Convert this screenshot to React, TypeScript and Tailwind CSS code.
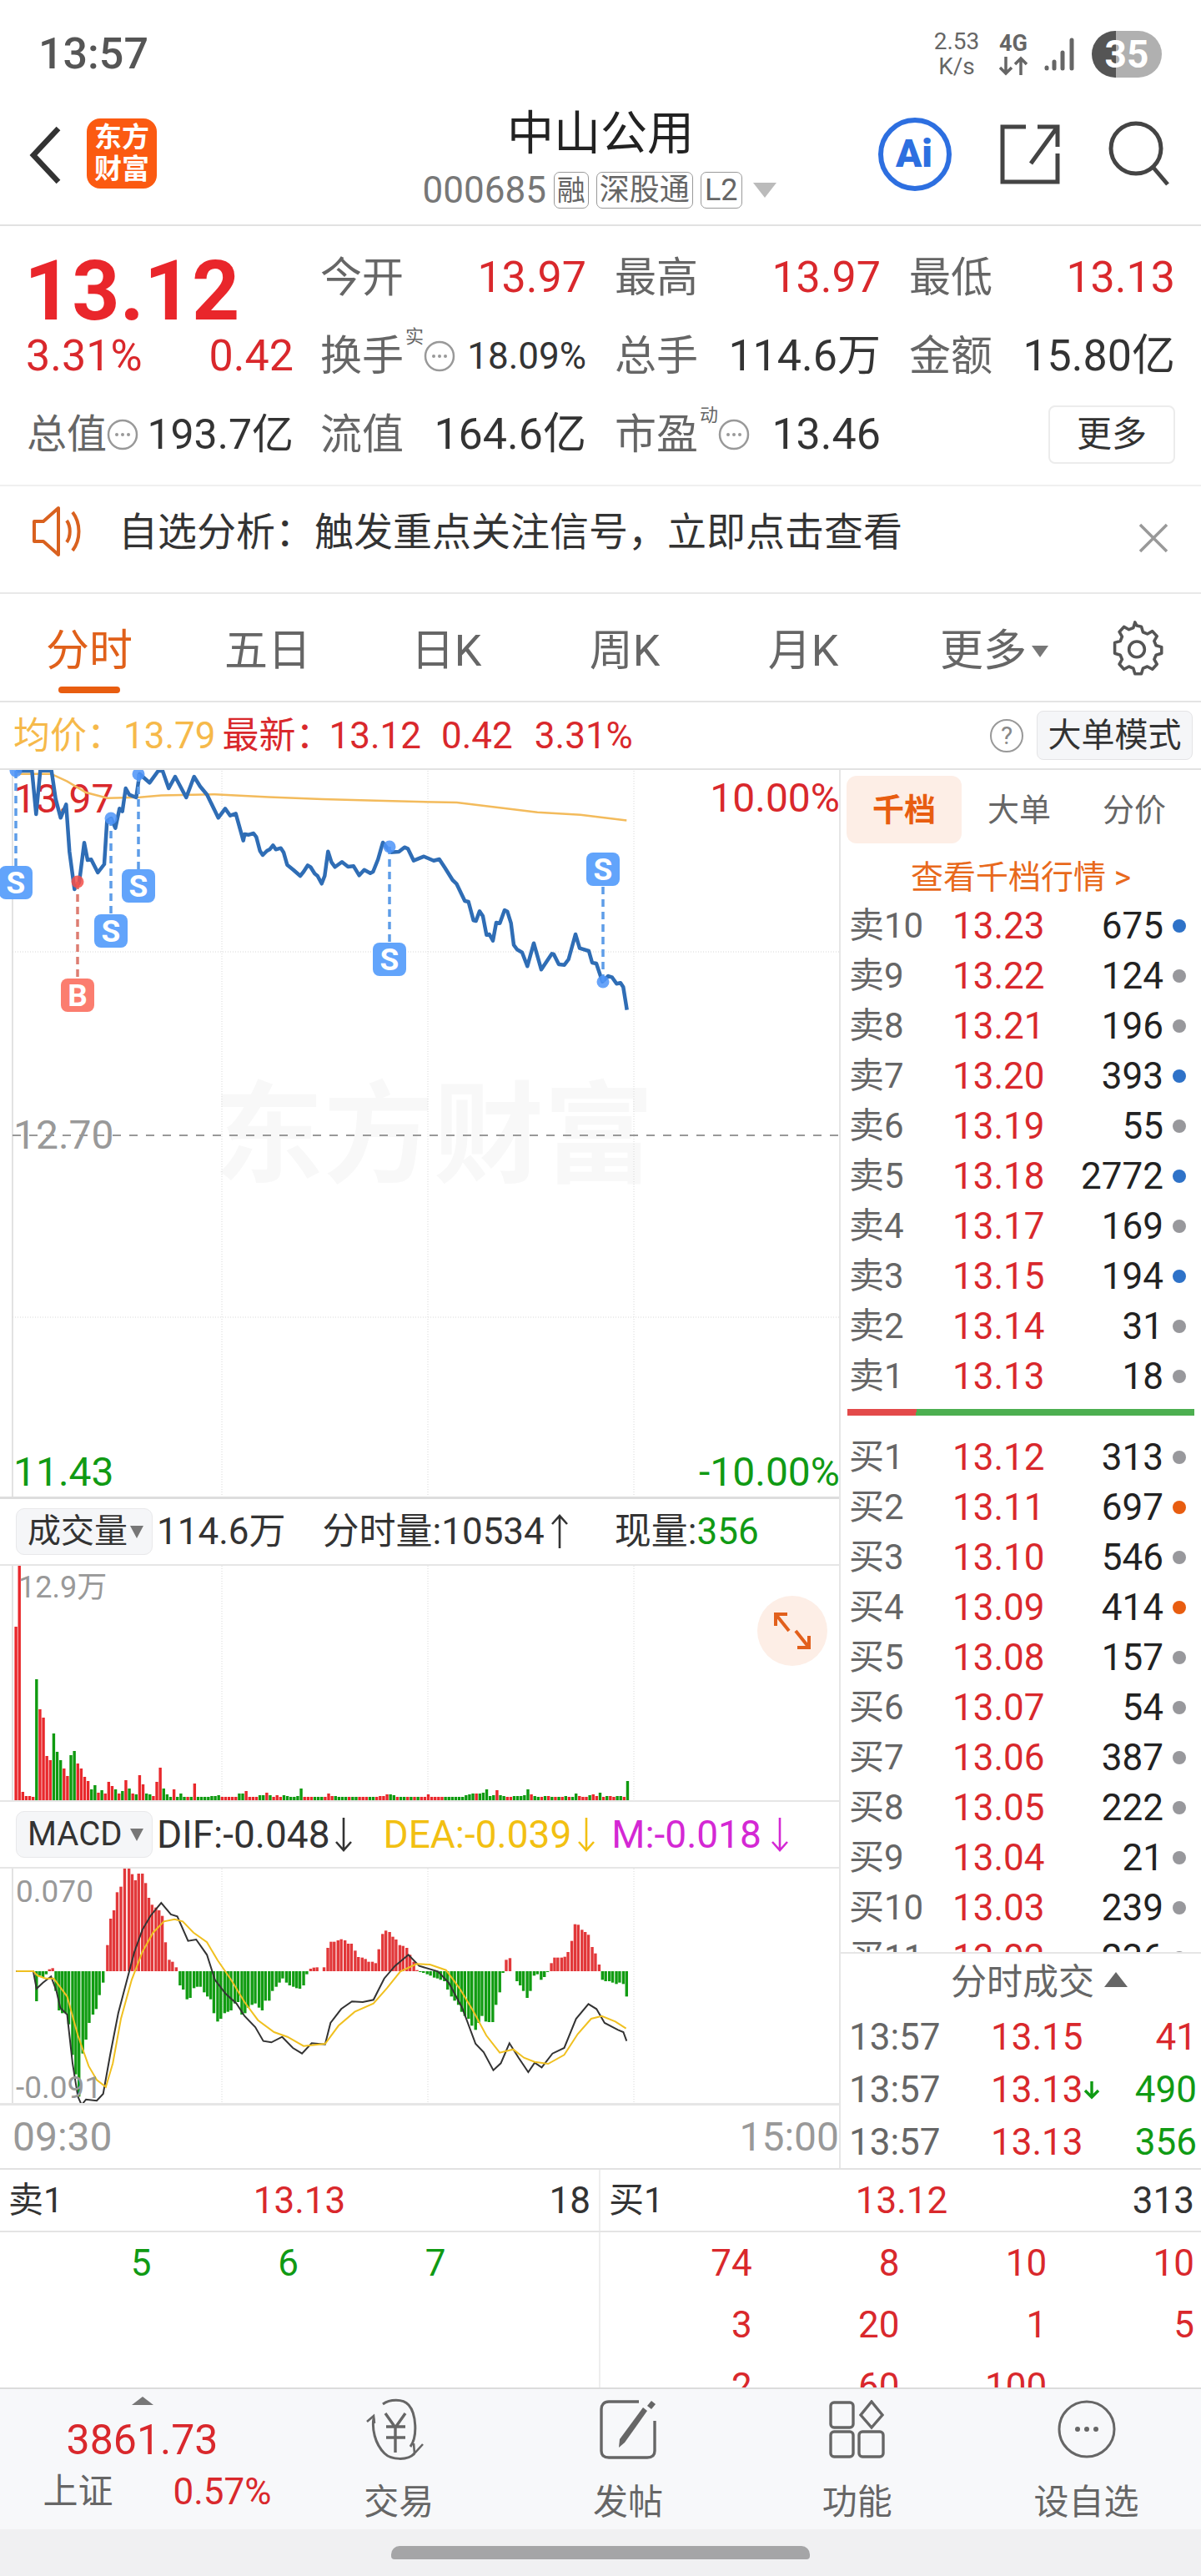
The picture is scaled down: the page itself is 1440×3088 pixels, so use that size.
import React from "react";

// 分时价格线 (real px, chart top = 921)
const pricePts: number[][] = [
  [57,10],[115,8],[130,165],[145,8],[185,8],[200,110],[218,178],[238,130],[250,300],[268,435],[285,410],[303,268],[315,330],[328,328],[352,375],[375,345],[385,190],[400,180],[415,215],[430,145],[440,155],[452,72],[465,95],[490,105],[502,20],[538,52],[570,8],[585,10],[607,72],[630,30],[670,105],[698,30],[720,65],[745,95],[785,178],[810,145],[828,170],[848,163],[875,260],
].map(([x, y]) => [x / 3, y / 3]);
const priceTail = [
  [10,30],[25,32],[42,27],[52,40],[65,90],[75,105],[90,90],[100,85],[112,70],[122,85],[140,80],[150,95],[163,140],[185,158],[210,180],[222,165],[237,142],[247,148],[262,172],[272,180],[287,208],[298,180],[310,92],[322,130],[335,148],[360,130],[382,147],[402,145],[422,178],[440,158],[462,170],[472,165],[490,120],[507,60],[535,95],[565,93],[585,77],[597,82],[618,125],[655,110],[690,125],[710,120],[730,150],[758,195],[772,208],[802,270],[815,273],[833,340],[842,342],[855,307],[867,325],[880,392],[890,390],[903,413],[915,348],[928,350],[945,303],[955,308],[968,350],[978,428],[990,445],[1008,455],[1027,505],[1050,422],[1077,517],[1095,490],[1115,460],[1122,462],[1140,498],[1160,500],[1175,480],[1200,390],[1215,440],[1248,450],[1260,492],[1275,495],[1297,560],[1318,540],[1332,545],[1348,568],[1362,565],[1372,580],[1385,662],
].map(([x, y]) => [290 + x / 3, 69 + y / 3]);
const avgPts = [
  [30,735],[95,735],[125,755],[160,785],[200,800],[260,798],[300,793],[400,790],[500,797],[600,803],[700,807],[850,812],[930,826],[1000,838],[1080,845],[1166,860],
].map(([x, y]) => [x / 1.552, (y - 720) / 2.24]);

const toLine = (pts: number[][]) => pts.map(([x, y]) => `${x.toFixed(1)},${y.toFixed(1)}`).join(" ");

// 成交量: + red, - green, px height
const volBars = [
  208,284,10,5,5,4,-145,109,99,53,48,-80,-58,-48,38,29,-54,-59,44,38,28,23,-13,-18,9,-12,8,22,17,-13,8,-11,24,-14,8,-7,30,19,-8,-7,5,22,39,-14,-7,-4,13,-4,-8,-4,4,-4,20,
  -4,-4,-4,-4,-5,-5,-6,4,4,4,4,4,-8,-8,11,4,4,4,-6,-6,9,-6,4,6,4,-6,-5,-4,-4,-5,-14,4,4,4,-4,-4,-4,4,8,5,-5,-4,-4,-4,4,-4,-4,4,4,4,-4,-4,4,5,5,7,-7,-6,4,-4,
  -4,4,-4,4,-4,4,4,7,4,4,4,4,-4,-4,-4,-4,-4,-4,-6,-7,-8,8,-8,-9,-13,-5,-6,12,-6,-5,4,4,-5,-5,-5,-6,-13,7,-5,-4,4,-5,5,-4,4,-4,4,-5,4,-4,-8,5,4,4,-6,7,5,-9,4,-5,5,4,-5,-5,4,-23,
];

// MACD: [zoom x, zoom y]; zero at 549
const macdBars = [
  [68,657],[74,565],[80,570],[86,560],[92,542],[98,538],[104,620],[110,690],[116,700],[122,700],[128,740],[135,850],[141,920],[147,1000],[154,845],[160,795],[166,735],[173,705],[179,685],[185,635],[192,590],
  [200,455],[206,360],[212,330],[218,265],[225,245],[232,180],[240,178],[246,200],[252,222],[258,198],[265,198],[271,232],[277,285],[283,310],[290,320],[296,330],[302,350],[308,445],[315,508],[321,515],[328,535],
  [335,600],[341,615],[348,650],[354,645],[361,610],[367,605],[373,605],[380,625],[386,640],[392,650],[398,700],[405,730],[411,720],[418,700],[424,695],[430,690],[437,665],[443,660],[450,705],[456,700],[462,680],[469,670],[475,665],[482,680],[488,690],[494,655],[501,655],[507,620],[514,605],[520,590],[526,575],[533,590],[539,600],[546,605],[552,610],[558,612],[565,600],[571,560],
  [578,540],[584,536],[590,535],[603,535],[610,465],[616,443],[622,443],[629,438],[635,434],[642,438],[648,450],[654,450],[661,475],[667,498],[674,500],[680,505],[686,515],[693,515],[699,520],[705,470],[712,415],[718,403],[725,408],[731,425],[737,435],[744,455],[750,458],[757,465],[763,490],[770,515],[776,545],
  [782,552],[788,555],[795,560],[801,565],[808,572],[814,575],[820,580],[827,585],[833,615],[840,640],[846,655],[853,670],[859,695],[865,710],[872,720],[878,745],[885,760],[891,735],[897,710],[904,730],[910,732],[917,732],[923,670],[930,625],[936,555],
  [942,508],[949,502],[962,585],[968,600],[974,620],[981,645],[987,620],[994,565],[1000,560],[1007,580],[1013,570],[1019,552],
  [1026,520],[1032,500],[1038,500],[1045,500],[1051,497],[1057,480],[1064,440],[1070,380],[1076,382],[1083,400],[1089,408],[1095,418],[1102,462],[1108,485],[1115,525],
  [1121,580],[1127,585],[1134,585],[1140,590],[1147,595],[1153,590],[1160,595],[1166,640],
];
const difPts = [
  [30,549],[62,549],[68,612],[80,590],[95,568],[105,620],[112,680],[125,705],[135,880],[145,1000],[152,1030],[160,1010],[180,1015],[192,990],[205,850],[220,700],[235,590],[250,480],[265,400],[280,350],[300,303],[318,345],[330,352],[350,440],[365,435],[385,490],[400,580],[420,630],[440,665],[455,710],[475,750],[490,800],[505,805],[525,785],[545,825],[562,845],[580,808],[605,812],[615,735],[635,685],[655,658],[675,660],[695,652],[715,575],[735,530],[760,490],[780,530],[815,550],[835,590],[860,680],[885,810],[900,840],[918,905],[932,880],[948,808],[965,860],[983,912],[995,878],[1008,895],[1028,845],[1050,825],[1072,720],[1095,667],[1110,685],[1125,735],[1150,760],[1160,768],[1166,800],
].map(([x, y]) => [x / 1.552, y / 3 - 60]);
const deaPts = [
  [30,549],[62,549],[70,565],[85,575],[100,575],[125,640],[145,780],[165,890],[180,940],[197,965],[210,880],[225,720],[245,580],[265,480],[285,410],[305,370],[325,362],[340,370],[360,410],[385,445],[405,510],[430,580],[455,660],[480,725],[510,768],[535,785],[565,818],[605,810],[630,745],[660,695],[695,665],[720,610],[745,550],[775,523],[800,525],[830,545],[855,610],[880,690],[905,780],[930,842],[955,830],[975,860],[995,875],[1020,882],[1050,850],[1075,775],[1100,720],[1120,710],[1145,730],[1165,755],
].map(([x, y]) => [x / 1.552, y / 3 - 60]);

const asks = [
  ["卖10","13.23","675","b"],["卖9","13.22","124","g"],["卖8","13.21","196","g"],["卖7","13.20","393","b"],["卖6","13.19","55","g"],
  ["卖5","13.18","2772","b"],["卖4","13.17","169","g"],["卖3","13.15","194","b"],["卖2","13.14","31","g"],["卖1","13.13","18","g"],
];
const bids = [
  ["买1","13.12","313","g"],["买2","13.11","697","o"],["买3","13.10","546","g"],["买4","13.09","414","o"],["买5","13.08","157","g"],
  ["买6","13.07","54","g"],["买7","13.06","387","g"],["买8","13.05","222","g"],["买9","13.04","21","g"],["买10","13.03","239","g"],["买11","13.02","236","g"],
];
const dotColor: Record<string, string> = { b: "bg-[#2e72c8]", g: "bg-[#98989c]", o: "bg-[#e85d10]" };

const GridLines = ({ h }: { h: number }) => (
  <g stroke="#d8d8d8" strokeWidth="1" strokeDasharray="1 2">
    <line x1="266" y1="0" x2="266" y2={h} />
    <line x1="513" y1="0" x2="513" y2={h} />
    <line x1="760" y1="0" x2="760" y2={h} />
  </g>
);

const Marker = ({ x, y, dotY, kind }: { x: number; y: number; dotY: number; kind: "S" | "B" }) => {
  const fill = kind === "S" ? "#62a4fb" : "#fb7d6f";
  const dash = kind === "S" ? "#5e9de8" : "#dd7d72";
  const dot = kind === "S" ? "#4d94f8" : "#f4504a";
  return (
    <g>
      <line x1={x} y1={dotY} x2={x} y2={dotY < y ? y - 20 : y + 20} stroke={dash} strokeWidth="3.5" strokeDasharray="9 6" />
      <circle cx={x} cy={dotY} r="7.5" fill={dot} fillOpacity="0.85" />
      <rect x={x - 20} y={y - 20} width="40" height="40" rx="8" fill={fill} />
      <text x={x} y={y + 13} textAnchor="middle" fontSize="37" fontWeight="700" fill="#fff" fontFamily="Roboto, sans-serif">{kind}</text>
    </g>
  );
};

const QuoteCell = ({ label, value, red }: { label: string; value: string; red?: boolean }) => (
  <div className="flex items-center justify-between h-[94px]">
    <span className="text-[50px] leading-none text-[#666]">{label}</span>
    <span className={`text-[52px] leading-none ${red ? "text-[#d9282c]" : "text-[#333]"}`}>{value}</span>
  </div>
);

const Dots = () => (
  <svg width="38" height="38" viewBox="0 0 38 38" className="shrink-0">
    <circle cx="19" cy="19" r="17" fill="none" stroke="#999" strokeWidth="2.5" />
    <circle cx="12" cy="19" r="2" fill="#999" />
    <circle cx="19" cy="19" r="2" fill="#999" />
    <circle cx="26" cy="19" r="2" fill="#999" />
  </svg>
);

const Sup = ({ t }: { t: string }) => <span className="text-[22px] leading-none text-[#666] mb-[46px] ml-[2px]">{t}</span>;

const Arrow = ({ up, color, ml }: { up?: boolean; color: string; ml: string }) => (
  <svg width="24" height="44" viewBox="0 0 24 44" className={`shrink-0 ${ml}`}>
    <path d={up ? "M12 42V3M3 13l9-10 9 10" : "M12 2v39M3 31l9 10 9-10"} fill="none" stroke={color} strokeWidth="2.6" />
  </svg>
);

const DepthRow = ({ r }: { r: string[] }) => (
  <div className="flex items-center h-[60px] shrink-0 pl-[10px]">
    <span className="w-[124px] text-[42px] leading-none text-[#666]">{r[0]}</span>
    <span className="w-[110px] text-[44px] leading-none text-[#d9282c]">{r[1]}</span>
    <span className="w-[143px] text-right text-[44px] leading-none text-[#222]">{r[2]}</span>
    <span className={`ml-[11px] w-4 h-4 rounded-full ${dotColor[r[3]]}`} />
  </div>
);

const Trade = ({ p, q, down, h }: { p: string; q: string; down?: boolean; h: string }) => (
  <div className={`flex items-center pl-[10px] pr-[5px] text-[44px] leading-none ${h}`}>
    <span className="w-[170px] text-[#666]">13:57</span>
    <span className="w-[110px] text-[#d9282c]">{p}</span>
    {down && (
      <svg width="22" height="28" viewBox="0 0 22 28" className="shrink-0">
        <path d="M11 4v19M3 15l8 8 8-8" fill="none" stroke="#109a14" strokeWidth="3.4" />
      </svg>
    )}
    <span className={`flex-1 text-right ${q === "41" ? "text-[#d9282c]" : "text-[#109a14]"}`}>{q}</span>
  </div>
);

const NavItem = ({ label, children }: { label: string; children: React.ReactNode }) => (
  <div className="w-[275px] flex flex-col items-center pt-[12px]">
    <div className="h-[72px] flex items-center">{children}</div>
    <span className="mt-[20px] text-[42px] leading-[64px] text-[#666]">{label}</span>
  </div>
);

const Dropdown = ({ label }: { label: string }) => (
  <div className="ml-[19px] w-[164px] h-[56px] flex items-center pl-[13px] bg-[#f5f6f8] border border-[#e8e8ea] rounded-[10px]">
    <span className="w-[122px] text-[40px] leading-none text-[#333] whitespace-nowrap">{label}</span>
    <svg width="18" height="18" viewBox="0 0 18 18"><path d="M1 2h16L9 17z" fill="#777" /></svg>
  </div>
);

export default function App() {
  return (
    <div className="w-[1440px] h-[3088px] overflow-hidden bg-white [font-family:Roboto,'Noto_Sans_CJK_SC',sans-serif]">
      {/* status bar */}
      <div className="h-[110px] pt-[20px] pl-[46px] pr-[47px] flex items-center justify-between">
        <span className="text-[52px] leading-none font-medium text-[#555]">13:57</span>
        <div className="flex items-center">
          <div className="w-[60px] flex flex-col items-center text-[28px] leading-[30px] text-[#666]">
            <span>2.53</span>
            <span>K/s</span>
          </div>
          <div className="ml-[20px] w-[36px] flex flex-col items-center">
            <span className="text-[27px] leading-[28px] font-bold text-[#666]">4G</span>
            <svg width="36" height="26" viewBox="0 0 36 26">
              <path d="M9 2v20M2 15l7 7 7-7M27 24V4M20 11l7-7 7 7" fill="none" stroke="#666" strokeWidth="3.5" />
            </svg>
          </div>
          <svg width="40" height="42" viewBox="0 0 40 42" className="ml-[18px]">
            <g stroke="#666" strokeWidth="5" strokeLinecap="round">
              <line x1="4" y1="37" x2="4" y2="38" />
              <line x1="13" y1="30" x2="13" y2="38" />
              <line x1="23" y1="19" x2="23" y2="38" />
              <line x1="34" y1="4" x2="34" y2="38" />
            </g>
          </svg>
          <div className="ml-[18px] w-[84px] h-[56px] rounded-full overflow-hidden flex items-center justify-center text-[46px] font-bold leading-none text-white bg-[linear-gradient(90deg,#555_0_34%,#b0b0b0_34%_100%)]">35</div>
        </div>
      </div>

      {/* header */}
      <div className="h-[161px] border-b-2 border-[#e2e2e2] grid grid-cols-[1fr_auto_1fr]">
        <div className="flex items-start pl-[34px] pt-[32px]">
          <svg width="40" height="72" viewBox="0 0 40 72" className="mt-[8px]">
            <path d="M36 4L6 36l30 32" fill="none" stroke="#333" strokeWidth="6.5" />
          </svg>
          <div className="ml-[30px] w-[84px] h-[84px] rounded-[16px] bg-[#fb5a11] flex flex-col items-center justify-center text-white text-[33px] font-bold leading-[38px]">
            <span>东方</span>
            <span>财富</span>
          </div>
        </div>
        <div className="flex flex-col items-center pt-[18px]">
          <span className="text-[56px] leading-[64px] text-[#222]">中山公用</span>
          <div className="mt-[14px] -ml-[3px] h-[44px] flex items-center">
            <span className="text-[44px] leading-none text-[#777]">000685</span>
            <span className="ml-[9px] h-[44px] px-[3px] flex items-center border border-[#999] rounded-[7px] text-[34px] leading-none text-[#666]">融</span>
            <span className="ml-[9px] h-[44px] px-[3px] flex items-center border border-[#999] rounded-[7px] text-[36px] leading-none text-[#666]">深股通</span>
            <span className="ml-[9px] h-[44px] px-[4px] flex items-center border border-[#999] rounded-[7px] text-[36px] leading-none text-[#666]">L2</span>
            <svg width="28" height="18" viewBox="0 0 28 18" className="ml-[13px]"><path d="M0 0h28L14 18z" fill="#bbb" /></svg>
          </div>
        </div>
        <div className="flex items-start justify-end pr-[35px] pt-[30px]">
          <svg width="90" height="90" viewBox="0 0 90 90">
            <circle cx="45" cy="45" r="41" fill="none" stroke="#2d6fe0" strokeWidth="6" />
            <text x="44" y="60" textAnchor="middle" fontSize="46" fontWeight="900" fill="#2d6fe0" fontFamily="Roboto, sans-serif">Ai</text>
          </svg>
          <svg width="74" height="74" viewBox="0 0 74 74" className="ml-[56px] mt-[8px]">
            <path d="M32 4H4v66h66V36M70 4L38 48M46 4h24v24" fill="none" stroke="#444" strokeWidth="5" />
          </svg>
          <svg width="76" height="78" viewBox="0 0 76 78" className="ml-[57px] mt-[5px]">
            <circle cx="33" cy="33" r="30" fill="none" stroke="#444" strokeWidth="5" />
            <path d="M54 56l17 20" fill="none" stroke="#444" strokeWidth="5" />
          </svg>
        </div>
      </div>

      {/* quote */}
      <div className="h-[312px] pt-[15px] pl-[32px] border-b-2 border-[#f0f0f0] grid grid-cols-[318px_319px_319px_319px] grid-rows-[94px_94px_94px] gap-x-[34px]">
        <div className="pt-[24px] -ml-[3px] text-[100px] leading-[78px] font-bold text-[#e9262b]">13.12</div>
        <QuoteCell label="今开" value="13.97" red />
        <QuoteCell label="最高" value="13.97" red />
        <QuoteCell label="最低" value="13.13" red />
        <div className="w-[320px] h-[94px] flex items-center justify-between text-[#d9282c] leading-none">
          <span className="-ml-[1px] text-[52px]">3.31%</span>
          <span className="text-[52px]">0.42</span>
        </div>
        <div className="flex items-center justify-between h-[94px]">
          <div className="flex items-center">
            <span className="text-[50px] leading-none text-[#666]">换手</span>
            <Sup t="实" />
            <Dots />
          </div>
          <span className="text-[44px] leading-none text-[#333]">18.09%</span>
        </div>
        <QuoteCell label="总手" value="114.6万" />
        <QuoteCell label="金额" value="15.80亿" />
        <div className="w-[320px] h-[94px] flex items-center justify-between">
          <div className="flex items-center">
            <span className="text-[48px] leading-none text-[#666]">总值</span>
            <Dots />
          </div>
          <span className="text-[50px] leading-none text-[#333]">193.7亿</span>
        </div>
        <QuoteCell label="流值" value="164.6亿" />
        <div className="flex items-center justify-between h-[94px]">
          <div className="flex items-center">
            <span className="text-[50px] leading-none text-[#666]">市盈</span>
            <Sup t="动" />
            <Dots />
          </div>
          <span className="text-[52px] leading-none text-[#333]">13.46</span>
        </div>
        <div className="flex justify-end items-center h-[94px]">
          <div className="w-[152px] h-[70px] flex items-center justify-center border-2 border-[#ececec] rounded-[8px] text-[42px] leading-none text-[#333]">更多</div>
        </div>
      </div>

      {/* notice */}
      <div className="h-[129px] flex items-start border-b-2 border-[#e8e8e8]">
        <svg width="64" height="66" viewBox="0 0 64 66" className="ml-[38px] mt-[21px]">
          <path d="M3 21h11L32 5v56L14 45H3zM42 20c5 7 5 19 0 26M49 10c10 13 10 33 0 46" fill="none" stroke="#d9611f" strokeWidth="4" strokeLinejoin="round" />
        </svg>
        <span className="ml-[40px] mt-[30px] text-[47px] leading-[50px] text-[#333] whitespace-nowrap">自选分析：触发重点关注信号，立即点击查看</span>
        <svg width="38" height="38" viewBox="0 0 38 38" className="ml-auto mr-[38px] mt-[43px]">
          <path d="M3 3l32 32M35 3L3 35" stroke="#999" strokeWidth="3.5" fill="none" />
        </svg>
      </div>

      {/* tabs */}
      <div className="h-[130px] flex items-start border-b-2 border-[#e4e4e4]">
        {["分时", "五日", "日K", "周K", "月K"].map((t, i) => (
          <div key={t} className="w-[214px] flex flex-col items-center pt-[37px]">
            <span className={`text-[52px] leading-[64px] ${i === 0 ? "text-[#e0601a]" : "text-[#666]"}`}>{t}</span>
            {i === 0 && <span className="mt-[10px] w-[74px] h-[8px] rounded-full bg-[#e85d10]" />}
          </div>
        ))}
        <div className="w-[214px] flex items-center justify-center pt-[37px] pl-[30px] h-[101px]">
          <span className="text-[52px] leading-[64px] text-[#666]">更多</span>
          <svg width="20" height="14" viewBox="0 0 20 14" className="ml-[6px]"><path d="M0 0h20L10 14z" fill="#777" /></svg>
        </div>
        <svg width="66" height="66" viewBox="0 0 24 24" className="ml-[46px] mt-[32px]" fill="none" stroke="#555" strokeWidth="1.3" strokeLinejoin="round">
          <path d="M12 2.2l2 .4.7 2.4 1.9.8 2.2-1.2 2 2.2-1.2 2.1.8 1.9 2.4.7v2.8l-2.4.7-.8 1.9 1.2 2.1-2 2.2-2.2-1.2-1.9.8-.7 2.4h-2.8l-.7-2.4-1.9-.8-2.2 1.2-2-2.2 1.2-2.1-.8-1.9-2.4-.7V9.6l2.4-.7.8-1.9-1.2-2.1 2-2.2 2.2 1.2 1.9-.8.7-2.4z" />
          <circle cx="12" cy="12.5" r="3.4" />
        </svg>
      </div>

      {/* average row */}
      <div className="h-[79px] pl-[16px] pr-[10px] flex items-center text-[44px] leading-none">
        <span className="text-[#f6b94a]">均价：13.79</span>
        <span className="ml-[8px] text-[#d9282c]">最新：</span>
        <span className="-ml-[4px] text-[#d9282c]">13.12</span>
        <span className="ml-[24px] text-[#d9282c]">0.42</span>
        <span className="ml-[26px] text-[#d9282c]">3.31%</span>
        <div className="ml-auto flex items-center">
          <div className="w-[40px] h-[40px] rounded-full border-2 border-[#999] flex items-center justify-center text-[30px] leading-none text-[#888]">?</div>
          <div className="ml-[16px] w-[187px] h-[59px] flex items-center justify-center bg-[#f5f6f8] border border-[#e4e4e6] rounded-[8px] text-[40px] leading-none text-[#333]">大单模式</div>
        </div>
      </div>

      {/* main */}
      <div className="flex h-[1680px] border-t-2 border-b-2 border-[#e2e2e2]">
        <div className="w-[1008px] shrink-0 border-r-2 border-[#e6e6e6] flex flex-col">
          {/* price chart */}
          <div className="relative h-[874px] shrink-0 border-b-[3px] border-[#ddd] overflow-hidden">
            <div className="absolute left-[256px] top-[373px] text-[132px] leading-none font-bold text-[#f8f8f8] whitespace-nowrap">东方财富</div>
            <span className="absolute left-[16px] top-[10px] text-[48px] leading-[50px] text-[#d9282c]">13.97</span>
            <span className="absolute right-[-1px] top-[9px] text-[48px] leading-[50px] text-[#d9282c]">10.00%</span>
            <span className="absolute left-[16px] top-[413px] text-[48px] leading-[50px] text-[#999]">12.70</span>
            <span className="absolute left-[16px] top-[817px] text-[48px] leading-[50px] text-[#109a14]">11.43</span>
            <span className="absolute right-[-1px] top-[817px] text-[48px] leading-[50px] text-[#109a14]">-10.00%</span>
            <svg width="1006" height="871" className="absolute left-0 top-0">
              <g transform="translate(0 -2)">
                <line x1="15" y1="0" x2="15" y2="873" stroke="#e2e2e2" strokeWidth="2" />
                <GridLines h={873} />
                <g stroke="#d8d8d8" strokeWidth="1" strokeDasharray="1 2">
                  <line x1="15" y1="220" x2="1006" y2="220" />
                  <line x1="15" y1="658" x2="1006" y2="658" />
                </g>
                <line x1="15" y1="440" x2="1006" y2="440" stroke="#999" strokeWidth="2" strokeDasharray="10 10" />
                <polyline points={toLine(avgPts)} fill="none" stroke="#f3bb5c" strokeWidth="2.5" />
                <polyline points={toLine([...pricePts, ...priceTail])} fill="none" stroke="#2f6db5" strokeWidth="4.5" strokeLinejoin="round" />
                <Marker x={19} y={137} dotY={3} kind="S" />
                <Marker x={133} y={195} dotY={60} kind="S" />
                <Marker x={166} y={141} dotY={7} kind="S" />
                <Marker x={467} y={229} dotY={94} kind="S" />
                <Marker x={723} y={121} dotY={256} kind="S" />
                <Marker x={93} y={272} dotY={136} kind="B" />
              </g>
            </svg>
          </div>

          {/* volume header */}
          <div className="h-[78px] shrink-0 flex items-center text-[44px] leading-none text-[#333] whitespace-nowrap">
            <Dropdown label="成交量" />
            <span className="ml-[5px]">114.6万</span>
            <span className="ml-[44px]">分时量:10534</span>
            <Arrow up color="#333" ml="ml-[6px]" />
            <span className="ml-[54px]">现量:<span className="text-[#109a14]">356</span></span>
          </div>

          {/* volume chart */}
          <div className="relative h-[285px] shrink-0 border-t-2 border-b-[2px] border-[#e6e6e6]">
            <svg width="1006" height="281" viewBox="0 0 1006 281" className="absolute left-0 top-0">
              <line x1="15" y1="0" x2="15" y2="281" stroke="#e2e2e2" strokeWidth="2" />
              <GridLines h={281} />
              {volBars.map((v, i) => {
                const h = Math.abs(v);
                return <rect key={i} x={17.4 + i * 4.12} y={281 - h} width="3.4" height={h} fill={v > 0 ? "#e9282c" : "#0f9a10"} />;
              })}
            </svg>
            <span className="absolute left-[22px] top-[5px] text-[36px] leading-[42px] text-[#999]">12.9万</span>
            <div className="absolute left-[908px] top-[36px] w-[84px] h-[84px] rounded-full bg-[#fdeee6] flex items-center justify-center">
              <svg width="44" height="44" viewBox="0 0 44 44">
                <path d="M2 16V2h14M2 2l16 20M42 28v14H28M42 42L26 22" fill="none" stroke="#e2601c" strokeWidth="4" />
              </svg>
            </div>
          </div>

          {/* macd header */}
          <div className="h-[78px] shrink-0 flex items-center text-[46px] leading-none whitespace-nowrap">
            <Dropdown label="MACD" />
            <span className="ml-[5px] text-[#333]">DIF:-0.048</span>
            <Arrow color="#333" ml="ml-[4px]" />
            <span className="ml-[36px] text-[#f2c012]">DEA:-0.039</span>
            <Arrow color="#f2c012" ml="ml-[6px]" />
            <span className="ml-[18px] text-[#d428d4]">M:-0.018</span>
            <Arrow color="#d428d4" ml="ml-[10px]" />
          </div>

          {/* macd chart */}
          <div className="relative h-[286px] shrink-0 border-t-2 border-b-[3px] border-[#e6e6e6]">
            <svg width="1006" height="281" viewBox="0 0 1006 281" className="absolute left-0 top-0">
              <line x1="15" y1="0" x2="15" y2="281" stroke="#e2e2e2" strokeWidth="2" />
              <GridLines h={281} />
              {macdBars.map(([zx, zy], i) => {
                const y = zy / 3 - 60;
                const zero = 123;
                return (
                  <rect key={i} x={zx / 1.552 - 1.7} y={Math.min(y, zero)} width="3.4" height={Math.abs(y - zero)} fill={zy < 549 ? "#e2383a" : "#119c12"} />
                );
              })}
              <polyline points={toLine(difPts)} fill="none" stroke="#333" strokeWidth="2" />
              <polyline points={toLine(deaPts)} fill="none" stroke="#f0c020" strokeWidth="2" />
            </svg>
            <span className="absolute left-[19px] top-[6px] text-[37px] leading-[44px] text-[#999]">0.070</span>
            <span className="absolute left-[19px] top-[241px] text-[37px] leading-[44px] text-[#999]">-0.091</span>
          </div>

          {/* time axis */}
          <div className="flex-1 flex items-center justify-between pl-[15px] pr-[0px] text-[48px] leading-none text-[#999]">
            <span>09:30</span>
            <span>15:00</span>
          </div>
        </div>

        {/* right panel */}
        <div className="flex-1 min-w-0 flex flex-col">
          <div className="flex pt-[7px] pl-[7px] shrink-0">
            <div className="w-[138px] h-[81px] rounded-[12px] bg-[#fdeee6] flex items-center justify-center text-[38px] leading-none font-bold text-[#e85d10]">千档</div>
            <div className="w-[138px] h-[81px] flex items-center justify-center text-[38px] leading-none text-[#666]">大单</div>
            <div className="w-[138px] h-[81px] flex items-center justify-center text-[38px] leading-none text-[#666]">分价</div>
          </div>
          <div className="h-[69px] shrink-0 pt-[14px] flex items-center justify-center text-[39px] leading-none text-[#e8691c]">查看千档行情 &gt;</div>
          <div className="shrink-0 flex flex-col">
            {asks.map((r) => <DepthRow key={r[0]} r={r} />)}
          </div>
          <div className="mt-[9px] ml-[8px] mr-[8px] h-[8px] shrink-0 bg-[linear-gradient(105deg,#e34a4a_0_20%,#4caf50_20%_100%)]" />
          <div className="mt-[20px] h-[623px] shrink-0 overflow-hidden flex flex-col">
            {bids.map((r) => <DepthRow key={r[0]} r={r} />)}
          </div>
          <div className="border-t-2 border-[#e6e6e6] h-[70px] shrink-0 pl-[44px] flex items-center justify-center text-[#666]">
            <span className="text-[43px] leading-none">分时成交</span>
            <svg width="28" height="18" viewBox="0 0 28 18" className="ml-[12px] mb-[6px]"><path d="M0 18L14 0l14 18z" fill="#666" /></svg>
          </div>
          <Trade p="13.15" q="41" h="h-[64px]" />
          <Trade p="13.13" q="490" down h="h-[64px]" />
          <Trade p="13.13" q="356" h="h-[62px]" />
        </div>
      </div>

      {/* level 1 row */}
      <div className="flex h-[75px] border-b-2 border-[#e4e4e4] text-[44px] leading-none">
        <div className="w-[720px] shrink-0 border-r-2 border-[#eee] px-[10px] grid grid-cols-3 items-center">
          <span className="text-[42px] text-[#333]">卖1</span>
          <span className="text-center text-[#d9282c]">13.13</span>
          <span className="text-right text-[#333]">18</span>
        </div>
        <div className="flex-1 pl-[10px] pr-[8px] grid grid-cols-3 items-center">
          <span className="text-[42px] text-[#333]">买1</span>
          <span className="text-center text-[#d9282c]">13.12</span>
          <span className="text-right text-[#333]">313</span>
        </div>
      </div>

      {/* ticks */}
      <div className="flex h-[186px] overflow-hidden text-[44px] leading-[74px]">
        <div className="w-[720px] shrink-0 border-r-2 border-[#eee] pl-[5px] pr-[7px] grid grid-cols-4 auto-rows-[74px] text-right text-[#109a14]">
          <span>5</span><span>6</span><span>7</span><span />
        </div>
        <div className="flex-1 pl-[5px] pr-[8px] grid grid-cols-4 auto-rows-[74px] text-right text-[#d9282c]">
          {["74","8","10","10","3","20","1","5","2","60","100",""].map((t, i) => <span key={i}>{t}</span>)}
        </div>
      </div>

      {/* footer */}
      <div className="h-[170px] bg-[#f7f8fa] border-t-2 border-[#dcdcdc] flex">
        <div className="w-[341px] shrink-0 flex flex-col items-center pt-[9px]">
          <svg width="26" height="10" viewBox="0 0 26 10"><path d="M0 10L13 0l13 10z" fill="#777" /></svg>
          <span className="mt-[14px] text-[50px] leading-[56px] text-[#d9282c]">3861.73</span>
          <div className="mt-[12px] ml-[36px] w-[274px] flex items-center justify-between">
            <span className="text-[42px] leading-none text-[#666]">上证</span>
            <span className="text-[44px] leading-none text-[#d9282c]">0.57%</span>
          </div>
        </div>
        <NavItem label="交易">
          <svg width="82" height="74" viewBox="0 0 82 74" fill="none" stroke="#666" strokeWidth="3">
            <path d="M22 7C30 1 46 0 53 8c9 10 11 38 2 50M60 66c-8 9-28 8-36 0C12 54 9 36 11 24" />
            <path d="M3 28l8-7 1 9M70 55l-10 11-1-12" strokeWidth="2.6" />
            <path d="M27 22l12 17 12-17M39 39v30M28 38h23M28 51h23" strokeWidth="3.4" transform="translate(-2 -4)" />
          </svg>
        </NavItem>
        <NavItem label="发帖">
          <svg width="70" height="72" viewBox="0 0 70 72" fill="none" stroke="#666" strokeWidth="3.4">
            <path d="M48 3H12C6 3 3 7 3 12v50c0 5 3 8 9 8h46c6 0 9-3 9-8V26" />
            <path d="M25 48L53 10l5 4-27 38-7 6z" fill="#666" stroke="none" />
            <path d="M58 8l5-6 5 4-5 6z" fill="#666" stroke="none" />
          </svg>
        </NavItem>
        <NavItem label="功能">
          <svg width="68" height="70" viewBox="0 0 68 70" fill="none" stroke="#666" strokeWidth="3.4">
            <rect x="2" y="3" width="27" height="30" rx="4" />
            <rect x="2" y="38" width="27" height="30" rx="4" />
            <rect x="36" y="38" width="29" height="30" rx="4" />
            <path d="M51 2l13 16-13 15-13-15z" />
          </svg>
        </NavItem>
        <NavItem label="设自选">
          <svg width="72" height="72" viewBox="0 0 72 72" fill="none" stroke="#666" strokeWidth="3">
            <circle cx="36" cy="36" r="33" />
            <circle cx="25" cy="36" r="3" fill="#666" stroke="none" />
            <circle cx="36" cy="36" r="3" fill="#666" stroke="none" />
            <circle cx="47" cy="36" r="3" fill="#666" stroke="none" />
          </svg>
        </NavItem>
      </div>

      {/* nav bar */}
      <div className="h-[56px] bg-[#f0f0f2] pt-[20px] flex justify-center">
        <div className="w-[502px] h-[16px] rounded-t-[10px] rounded-b-[4px] bg-[#a5a5a7]" />
      </div>
    </div>
  );
}
